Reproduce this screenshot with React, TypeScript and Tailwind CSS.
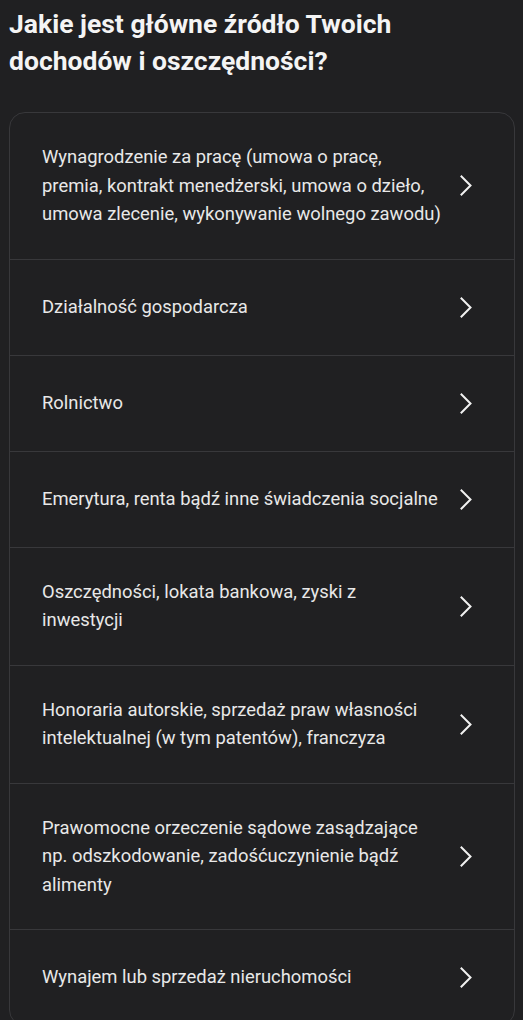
import React from "react";

const items: string[][] = [
  [
    "Wynagrodzenie za pracę (umowa o pracę,",
    "premia, kontrakt menedżerski, umowa o dzieło,",
    "umowa zlecenie, wykonywanie wolnego zawodu)",
  ],
  ["Działalność gospodarcza"],
  ["Rolnictwo"],
  ["Emerytura, renta bądź inne świadczenia socjalne"],
  ["Oszczędności, lokata bankowa, zyski z", "inwestycji"],
  [
    "Honoraria autorskie, sprzedaż praw własności",
    "intelektualnej (w tym patentów), franczyza",
  ],
  [
    "Prawomocne orzeczenie sądowe zasądzające",
    "np. odszkodowanie, zadośćuczynienie bądź",
    "alimenty",
  ],
  ["Wynajem lub sprzedaż nieruchomości"],
];

function Chevron() {
  return (
    <svg width="12" height="21" viewBox="0 0 12 21" fill="none">
      <polyline
        points="1.5,1.5 10.5,10.5 1.5,19.5"
        stroke="#f2f2f2"
        strokeWidth="2"
        strokeLinejoin="miter"
        strokeLinecap="square"
      />
    </svg>
  );
}

export default function App() {
  return (
    <div
      className="min-h-[1020px] bg-[#202022] pl-[9px] pr-[8px] pt-[5px] pb-10"
      style={{ fontFamily: "Roboto, 'Noto Sans', sans-serif" }}
    >
      <h1 className="text-[26.5px] font-bold leading-[37px] text-[#f4f4f4]">
        Jakie jest główne źródło Twoich
        <br />
        dochodów i oszczędności?
      </h1>
      <div className="mt-[33px] overflow-hidden rounded-2xl border border-[#38383b] bg-[#202022]">
        {items.map((lines, i) => (
          <button
            key={i}
            type="button"
            className={
              "flex w-full items-center gap-2 px-8 py-[30px] text-left " +
              (i > 0 ? "border-t border-[#38383b]" : "")
            }
          >
            <span className="flex-1 text-[18.4px] leading-[28.5px] text-[#e8e8e8]">
              {lines.map((l, j) => (
                <span key={j} className="block whitespace-nowrap">
                  {l}
                </span>
              ))}
            </span>
            <span className="flex h-[35px] w-8 shrink-0 items-center justify-center">
              <Chevron />
            </span>
          </button>
        ))}
      </div>
    </div>
  );
}
